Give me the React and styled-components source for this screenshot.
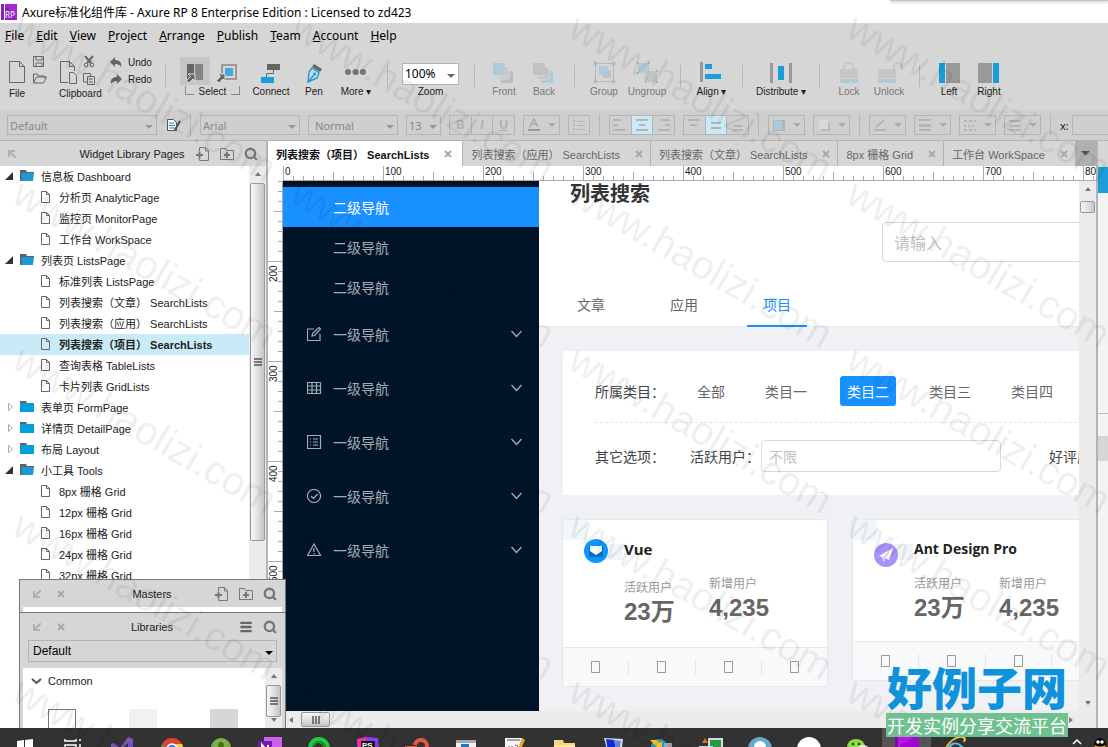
import React from "react";
import styled, { createGlobalStyle, css } from "styled-components";
import { Menu, Search } from "lucide-react";

const GlobalStyle = createGlobalStyle`
  * {
    box-sizing: border-box;
  }
  body {
    margin: 0;
    overflow: hidden;
    font-family: "Liberation Sans", "Noto Sans CJK SC", sans-serif;
    font-size: 11px;
    color: #222;
  }
  button, input, select {
    font: inherit;
    color: inherit;
    margin: 0;
    padding: 0;
    border: 0;
    border-radius: 0;
    background: none;
  }
  svg {
    display: block;
    flex: none;
  }
`;

const Desktop = styled.div`
  position: relative;
  height: 100vh;
  display: flex;
  flex-direction: column;
  overflow: hidden;
  background: #d6d6d6;
`;

/* ---------- title and menus ---------- */

const TitleBar = styled.header`
  display: flex;
  align-items: center;
  gap: 5px;
  height: 23px;
  padding-left: 1px;
  background: #fff;
  color: #000;
  font-family: "Noto Sans", "Noto Sans CJK SC", sans-serif;
  font-size: 12px;
  white-space: nowrap;
`;

const WindowShadow = styled.div`
  position: absolute;
  top: 0;
  right: 0;
  width: 218px;
  height: 1px;
  background: #c4c4c4;
  box-shadow: 0 1px 3px #999;
`;

const MenuBar = styled.nav`
  display: flex;
  gap: 12px;
  height: 24px;
  padding-left: 5px;
  color: #000;
  font-family: "Noto Sans", sans-serif;
  font-size: 12px;

  button::first-letter {
    text-decoration: underline;
  }
`;

/* ---------- main toolbar ---------- */

const Toolbar = styled.div`
  display: flex;
  align-items: flex-start;
  height: 63px;
  padding: 10px 0 0 9px;
  font-size: 10px;
  line-height: 12px;
  white-space: nowrap;
`;

const FileGroup = styled.div`
  width: ${(props) => props.$w}px;
  padding-top: 2px;
`;

const FileIcons = styled.div`
  display: flex;
  height: 29px;

  svg {
    overflow: visible;
  }
`;

const History = styled.div`
  display: flex;
  flex-direction: column;
  gap: 5px;
  width: 55px;

  button {
    display: flex;
    gap: 6px;
  }
`;

const Divider = styled.span`
  flex: none;
  width: 1px;
  height: 22px;
  margin: ${(props) => (props.$flat ? "0 1px" : "8px 0 0")};
  background: #b8b8b8;
`;

const Tool = styled.button`
  display: flex;
  flex-direction: column;
  align-items: center;
  flex: none;
  gap: 1px;
  width: ${(props) => props.$w}px;
  color: ${(props) => (props.disabled ? "#777" : "#222")};
`;

const ToolSpace = styled.span`
  flex: none;
  width: ${(props) => props.$w}px;
`;

const SelectModes = styled.div`
  width: 60px;
  margin: 0 9px 0 14px;
`;

const ModeRow = styled.div`
  display: flex;
`;

const Mode = styled.button`
  width: 30px;
  height: 28px;
  background: ${(props) => (props.$on ? "#c6c6c6" : "none")};
`;

const ModeLabel = styled.div`
  display: flex;
  justify-content: space-between;
  padding: 1px 0 0 5px;

  &::before, &::after {
    content: "";
    width: 8px;
    height: 8px;
    border: solid #888;
    border-width: 0 0 1px 1px;
  }
  &::after {
    border-width: 0 1px 1px 0;
  }
`;

const ZoomField = styled.div`
  display: flex;
  flex-direction: column;
  align-items: center;
  gap: 1px;
  width: 57px;
  margin: 6px 15px 0 14px;
`;

const Picker = styled.div`
  position: relative;
  flex: none;
  width: ${(props) => props.$w};
  height: ${(props) => props.$h || 20}px;
  border: 1px solid #b4b4b4;
  color: ${(props) => props.$color || "#888"};
  background: ${(props) => props.$bg || "none"};

  select {
    appearance: none;
    width: 100%;
    height: 100%;
    padding-left: ${(props) => props.$pad || 2}px;
    font-family: ${(props) =>
      props.$ui ? '"Liberation Sans", sans-serif' : '"Noto Sans", sans-serif'};
    font-size: ${(props) => props.$size || 11}px;
    outline: none;
  }
  svg {
    position: absolute;
    right: 3px;
    top: 50%;
    pointer-events: none;
  }
`;

/* ---------- format bar ---------- */

const FormatBar = styled.div`
  display: flex;
  align-items: center;
  gap: 8px;
  height: 30px;
  padding-left: 7px;
  background: #cfcfcf;
  white-space: nowrap;
`;

const Segments = styled.div`
  display: flex;
  flex: none;
  width: ${(props) => props.$w}px;
  border: 1px solid #b4b4b4;
`;

const Segment = styled.button`
  flex: 1;
  height: 18px;
  display: flex;
  align-items: center;
  justify-content: center;
  gap: 7px;
  color: #b0b0b0;
  background: ${(props) => (props.$on ? "#c9ebf7" : "none")};
  font-size: 12px;
  font-weight: bold;

  & + & {
    border-left: 1px solid #b4b4b4;
  }
`;

const PositionField = styled.div`
  display: flex;
  flex: 1;
  align-items: center;
  gap: 3px;
  margin-right: 2px;
  font-family: "Noto Sans", sans-serif;

  input {
    flex: 1;
    min-width: 0;
    height: 20px;
    border: 1px solid #b4b4b4;
  }
`;

/* ---------- workspace ---------- */

const Workspace = styled.div`
  flex: 1;
  min-height: 0;
  display: flex;
  border-top: 1px solid #b4b4b4;
`;

const PagesPanel = styled.aside`
  display: flex;
  flex-direction: column;
  flex: none;
  width: 268px;
  border-right: 2px solid #b4b4b4;
  background: #fff;
`;

const PanelHeader = styled.div`
  flex: none;
  display: flex;
  align-items: center;
  height: ${(props) => props.$h}px;
  padding: 0 8px;
  gap: 10px;
  background: #d6d6d6;

  h2 {
    flex: 1;
    margin: 0;
    padding-left: ${(props) => props.$left || 0}px;
    font-size: 11px;
    font-weight: normal;
    text-align: center;
    white-space: nowrap;
  }
`;

const DockControls = styled.div`
  display: flex;
  gap: 16px;
  padding-left: 5px;
`;

const PanelBody = styled.div`
  flex: 1;
  min-height: 0;
  display: flex;
`;

const Tree = styled.ul`
  flex: 1;
  margin: 0;
  padding: 0;
  list-style: none;
  overflow: hidden;
`;

const TreeRow = styled.li`
  display: flex;
  align-items: center;
  height: 21px;
  padding: 0 0 2px ${(props) => (props.$leaf ? 41 : 5)}px;
  gap: ${(props) => (props.$leaf ? 9 : 6)}px;
  background: ${(props) => (props.$on ? "#c9ebf7" : "none")};
  font-weight: ${(props) => (props.$on ? "bold" : "normal")};
  white-space: nowrap;
`;

const Track = styled.div`
  flex: none;
  display: flex;
  flex-direction: ${(props) => (props.$horizontal ? "row" : "column")};
  align-items: center;
  justify-content: space-between;
  ${(props) => (props.$horizontal ? "height: 17px" : "width: 17px")};
  padding: ${(props) => (props.$horizontal ? "0 5px" : "5px 0")};
  background: #ebebeb;
`;

const Thumb = styled.div`
  display: flex;
  align-items: center;
  justify-content: center;
  border: 1px solid #999;
  border-radius: 2px;
  background: linear-gradient(
    ${(props) => (props.$horizontal ? "to bottom" : "to right")},
    #f6f6f6,
    #e4e4e4 45%,
    #c4c4c8
  );
  ${(props) =>
    props.$horizontal
      ? css`
          width: ${props.$size};
          height: 15px;
          margin: 0 auto 0 7px;
        `
      : css`
          height: ${props.$size};
          width: 15px;
          margin: ${props.$gap || 8}px 0 auto;
        `}
`;

/* ---------- editor ---------- */

const Editor = styled.main`
  flex: 1;
  min-width: 0;
  display: flex;
  flex-direction: column;
  border-right: 2px solid #b4b4b4;
  background: #fff;
`;

const FileTabs = styled.div`
  display: flex;
  flex: none;
  height: 25px;
  background: #b0b0b0;
  overflow: hidden;
`;

const FileTab = styled.div`
  display: flex;
  flex: none;
  align-items: center;
  gap: 15px;
  padding: 0 ${(props) => (props.$on ? 10 : 7)}px 0 8px;
  border-right: 1px solid #b4b4b4;
  color: ${(props) => (props.$on ? "#111" : "#666")};
  background: ${(props) => (props.$on ? "#fff" : "#d6d6d6")};
  font-weight: ${(props) => (props.$on ? "bold" : "normal")};
  white-space: nowrap;
`;

const TabMenu = styled.button`
  flex: 1;
  display: flex;
  align-items: center;
  justify-content: center;
`;

const ticks = (dir, side) => css`
  background-image: repeating-linear-gradient(${dir}, #aaa 0 1px, transparent 1px 100px),
    repeating-linear-gradient(${dir}, #aaa 0 1px, transparent 1px 50px),
    repeating-linear-gradient(${dir}, #aaa 0 1px, transparent 1px 10px);
  background-repeat: no-repeat;
  background-position: ${side};
`;

const TopRuler = styled.div`
  flex: none;
  display: flex;
  height: 15px;
  margin-left: 15px;
  overflow: hidden;
  border-bottom: 1px solid #aaa;
  font-size: 10px;
  line-height: 11px;
  ${ticks("to right", "left bottom")}
  background-size: 100% 15px, 100% 8px, 100% 4px;

  span {
    flex: none;
    width: 100px;
    padding-left: 2px;
  }
`;

const EditorBody = styled.div`
  flex: 1;
  min-height: 0;
  display: flex;
`;

const SideRuler = styled.div`
  flex: none;
  width: 15px;
  overflow: hidden;
  border-right: 1px solid #aaa;
  padding-top: 80px;
  font-size: 10px;
  line-height: 12px;
  ${ticks("to bottom", "right -20px")}
  background-size: 15px 1000px, 8px 1000px, 4px 1000px;

  span {
    display: block;
    width: 12px;
    height: 100px;
    padding-bottom: 4px;
    writing-mode: vertical-rl;
    transform: rotate(180deg);
    text-align: right;
  }
`;

const Canvas = styled.div`
  flex: 1;
  min-width: 0;
  display: flex;
  overflow: hidden;
  font-family: "Noto Sans CJK SC", sans-serif;
  font-size: 14px;
`;

const SideNav = styled.nav`
  flex: none;
  width: 256px;
  padding-top: 6px;
  background: #001428;
`;

const SubItem = styled.a`
  display: block;
  height: 40px;
  padding-left: 50px;
  line-height: 40px;
  text-decoration: none;
  color: ${(props) => (props.$on ? "#fff" : "#a6adb4")};
  background: ${(props) => (props.$on ? "#1890ff" : "none")};
`;

const NavGroup = styled.button`
  display: flex;
  align-items: center;
  width: 100%;
  height: 54px;
  padding: 0 17px 0 24px;
  gap: 11px;
  color: #a6adb4;

  span {
    flex: 1;
    text-align: left;
  }
`;

const Page = styled.div`
  flex: 1;
  min-width: 0;
  overflow: hidden;
  background: #f0f1f5;
  color: #666;
  white-space: nowrap;
`;

const PageHead = styled.div`
  height: 146px;
  padding-left: 22px;
  background: #fff;
  border-bottom: 1px solid #e8e8e8;

  h1 {
    margin: 0 0 17px 9px;
    font-size: 20px;
    line-height: 24px;
    color: #333;
  }
`;

const SearchBox = styled.input`
  display: block;
  width: 400px;
  height: 40px;
  margin-left: 321px;
  padding-left: 11px;
  border: 1px solid #d9d9d9;
  border-radius: 4px;
  font-size: 16px;
  outline: none;

  &::placeholder {
    color: #bfbfbf;
  }
`;

const PageTabs = styled.div`
  display: flex;
  gap: 33px;
  margin-top: 21px;
`;

const PageTab = styled.button`
  height: 44px;
  padding: 0 16px;
  color: ${(props) => (props.$on ? "#1890ff" : "#666")};
  border-bottom: 2px solid ${(props) => (props.$on ? "#1890ff" : "transparent")};
`;

const Filters = styled.section`
  width: 800px;
  height: 144px;
  margin: 24px;
  padding: 9px 32px 0;
  background: #fff;
  border-radius: 2px;
`;

const FilterRow = styled.div`
  display: flex;
  align-items: center;
  height: ${(props) => props.$h}px;
  color: #444;

  & + & {
    border-top: 1px dashed #e4e4e4;
  }
`;

const Chips = styled.div`
  display: flex;
  gap: 26px;
  margin-left: 25px;
`;

const Chip = styled.button`
  height: 30px;
  padding: 0 7px;
  border-radius: 3px;
  color: ${(props) => (props.$on ? "#fff" : "#666")};
  background: ${(props) => (props.$on ? "#1890ff" : "none")};
`;

const FilterInput = styled.input`
  width: 240px;
  height: 32px;
  margin: 0 48px 0 1px;
  padding-left: 7px;
  border: 1px solid #d9d9d9;
  border-radius: 4px;
  outline: none;

  &::placeholder {
    color: #bfbfbf;
  }
`;

const Cards = styled.div`
  display: flex;
  flex-wrap: wrap;
  align-items: flex-start;
  width: 900px;
  gap: 24px;
  padding-left: 23px;
`;

const Card = styled.article`
  width: 266px;
  border: 1px solid #e6e8ea;
  border-radius: 2px;
  background: linear-gradient(#eff7f9, #eff7f9) 0 0 / 24px 20px no-repeat,
    linear-gradient(#eff7f9, #eff7f9) 36px 24px / 24px 16px no-repeat, #fff;
`;

const CardMain = styled.div`
  display: flex;
  gap: 16px;
  height: ${(props) => props.$h}px;
  padding: ${(props) => props.$top}px 0 0 21px;
`;

const CardText = styled.div`
  flex: 1;
  margin-top: ${(props) => props.$lift}px;

  h3 {
    margin: 0 0 16px;
    color: #222;
    font-family: "Open Sans", sans-serif;
    font-size: ${(props) => props.$size}px;
    line-height: 20px;
  }
`;

const Stats = styled.dl`
  display: flex;
  margin: 0;
`;

const Stat = styled.div`
  width: 85px;
  padding-top: ${(props) => props.$drop}px;

  dt {
    font-size: 12px;
    line-height: 16px;
    color: #999;
  }
  dd {
    margin: 3px 0 0;
    font: bold 24px/28px "Liberation Sans", "Noto Sans CJK SC", sans-serif;
    color: #666;
  }
`;

const CardActions = styled.div`
  display: flex;
  align-items: center;
  height: 39px;
  border-top: 1px solid #e6e8ea;
  background: #f7f9fa;
`;

const CardAction = styled.button`
  flex: 1;
  display: flex;
  justify-content: center;

  & + & {
    border-left: 1px solid #e4e6e8;
  }
`;

/* ---------- right edge ---------- */

const Inspector = styled.aside`
  flex: none;
  display: flex;
  flex-direction: column;
  width: 10px;
  padding-top: 26px;
  background: linear-gradient(#d6d6d6 26px, #f3f3f3 26px);
`;

const InspectorTab = styled.div`
  height: 26px;
  background: #1a9dd9;
`;

const InspectorSection = styled.div`
  height: 48px;
  margin-top: 220px;
  border-top: 1px solid #bbb;
  background: linear-gradient(#f3f3f3 22px, #d6d6d6 22px);
`;

/* ---------- floating panels ---------- */

const FloatingPanels = styled.div`
  position: absolute;
  left: 19px;
  bottom: 19px;
  width: 267px;
`;

const FloatingPanel = styled.section`
  border: 1px solid #777;
  border-bottom: 0;
  padding: 0 3px;
  background: #d6d6d6;
  height: ${(props) => props.$h}px;

  ${PanelHeader} {
    margin: 0 -3px;
  }
`;

const Blank = styled.div`
  height: 5px;
  background: #fff;
`;

const LibraryPicker = styled.div`
  padding: 0 5px;
`;

const LibraryBody = styled.div`
  display: flex;
  height: 60px;
  margin-top: 6px;
  background: #fff;
`;

const LibraryList = styled.div`
  flex: 1;
  padding: 7px 0 0 8px;
  overflow: hidden;

  h3 {
    display: flex;
    align-items: center;
    gap: 6px;
    margin: 0 0 21px;
    font-size: 11px;
    line-height: 13px;
    font-weight: normal;
  }
`;

const Swatches = styled.div`
  display: flex;
  gap: 53px;
  padding-left: 17px;
`;

const Swatch = styled.span`
  width: 28px;
  height: 28px;
  background: ${(props) => props.$fill};
  border: 1px solid ${(props) => props.$line || props.$fill};
`;

const ScrollRow = styled.div`
  flex: none;
  padding: 0 17px 0 15px;
  background: #ebebeb;
`;

/* ---------- taskbar ---------- */

const Taskbar = styled.footer`
  flex: none;
  display: flex;
  height: 19px;
  overflow: hidden;
  background: #323232;
`;

const TaskButton = styled.button`
  flex: none;
  display: flex;
  justify-content: center;
  width: 49px;
  height: 48px;
  padding-top: 9px;
  background: ${(props) => (props.$on ? "#555" : "none")};
`;

const Tray = styled.div`
  flex: 1;
  display: flex;
  justify-content: flex-end;
  gap: 10px;
  padding-top: 10px;
`;

/* ---------- overlays ---------- */

const WatermarkLayer = styled.div`
  position: absolute;
  inset: 0;
  display: grid;
  grid-template-columns: repeat(auto-fill, 278px);
  grid-auto-rows: 166px;
  padding: 6px 0 0 27px;
  width: 1400px;
  overflow: hidden;
  pointer-events: none;
  color: rgba(0, 0, 0, 0.08);
  font-size: 40px;
  line-height: 40px;

  span {
    transform: rotate(30deg);
    transform-origin: 0 0;
    white-space: nowrap;
  }
`;

const SiteBadge = styled.div`
  position: absolute;
  right: 40px;
  bottom: 10px;
  width: 182px;
  text-align: center;
  white-space: nowrap;
  font-family: "Noto Sans CJK SC", sans-serif;

  strong {
    display: block;
    margin-bottom: 3px;
    font-size: 45px;
    font-weight: 900;
    line-height: 46px;
    color: #0e92dc;
  }
  span {
    display: block;
    font-size: 18px;
    line-height: 24px;
    color: #fff;
    background: #70c191;
  }
`;

/* ---------- icons ---------- */

const Caret = ({ color = "#999", w = 8 }) => (
  <svg width={w} height={w / 2} viewBox="0 0 8 4">
    <path d="M0 0h8L4 4z" fill={color} />
  </svg>
);

const arrowPaths = {
  up: "M0 5 3 1l3 4z",
  down: "M0 1h6L3 5z",
  left: "M5 0v6L1 3z",
  right: "M1 0v6l4-3z",
};

const Arrow = ({ to }) => (
  <svg width="6" height="6" viewBox="0 0 6 6">
    <path d={arrowPaths[to]} fill="#777" />
  </svg>
);

const Grip = ({ turned }) => (
  <svg width="8" height="8" viewBox="0 0 8 8">
    <path
      d={turned ? "M1 0v8M4 0v8M7 0v8" : "M0 1h8M0 4h8M0 7h8"}
      stroke="#555"
      strokeWidth="1.500"
    />
  </svg>
);

const Cross = () => (
  <svg width="8" height="8" viewBox="0 0 8 8">
    <path d="m1 1 6 6M7 1 1 7" stroke="#a8a8a8" strokeWidth="2" />
  </svg>
);

const DockArrow = ({ up }) => (
  <svg width="8" height="8" viewBox="0 0 8 8" fill="none" stroke="#b0b0b0" strokeWidth="2">
    <path d={up ? "M7 1H1v6M1 1l7 7" : "M7 7H1V1M1 7l7-7"} />
  </svg>
);

const AddPage = () => (
  <svg width="14" height="14" viewBox="0 0 14 14" fill="none" stroke="#777">
    <path d="M3.500 4V.5h6l3 3v10h-9v-2M9.500 1v3h3" />
    <path d="M0 8h7M3.500 4.500v7" strokeWidth="2" />
  </svg>
);

const AddFolder = () => (
  <svg width="14" height="14" viewBox="0 0 14 14" fill="none" stroke="#777">
    <path d="M.5 12.500v-11h5l1 2h7v9z" />
    <path d="M4 8h6M7 5v6" strokeWidth="2" />
  </svg>
);

const PageIcon = () => (
  <svg width="9" height="12" viewBox="0 0 9 12" fill="none" stroke="#666">
    <path d="M.5.5h5l3 3v8h-8zM5.500.5v3h3" />
  </svg>
);

const FolderIcon = ({ open }) => (
  <svg width="15" height="12" viewBox="0 0 15 12">
    <path d="M0 0h6l1 2h7v2H0z" fill="#5d6066" />
    {open ? (
      <>
        <path d="M0 2h2v9H0z" fill="#5d6066" />
        <path d="M1 3h13l-1 8H2z" fill="#1b9ad6" />
      </>
    ) : (
      <path d="M0 2h14v9H0z" fill="#029fdd" />
    )}
  </svg>
);

const TreeArrow = ({ open }) => (
  <svg width="9" height="10" viewBox="0 0 9 10">
    {open ? (
      <path d="M8 1v8H0z" fill="#333" />
    ) : (
      <path d="M3.500 1.500v7l4-3.500z" fill="none" stroke="#aaa" />
    )}
  </svg>
);

const Art = ({ w = 28, children }) => (
  <svg width={w} height="28" viewBox={`0 0 ${w} 28`}>
    {children}
  </svg>
);

const Pointer = () => (
  <path
    d="M8 17h7v7l-2-2-4 4-2.500-2.500 4-4z"
    fill="#666"
    stroke="#ddd"
  />
);

const art = {
  connect: (
    <Art>
      <path d="M10 7h13v6H10z" fill="#666" />
      <path d="M16.500 13v3.500h-7V20" stroke="#666" fill="none" />
      <path d="M4 20h13v6H4z" fill="#1a9dd9" />
    </Art>
  ),
  pen: (
    <Art>
      <path d="m14 7 8 5-2 3-8-5z" fill="#666" />
      <path
        d="m12 11 7 5-2 5-9 4 1-10zM8 25l6-7"
        fill="none"
        stroke="#1a9dd9"
        strokeWidth="1.400"
      />
      <circle cx="14.500" cy="17" r="1.500" fill="#1a9dd9" />
    </Art>
  ),
  more: (
    <Art>
      <circle cx="6" cy="15" r="3" fill="#777" />
      <circle cx="13.500" cy="15" r="3" fill="#777" />
      <circle cx="21" cy="15" r="3" fill="#777" />
    </Art>
  ),
  front: (
    <Art>
      <path d="M15 14h8v12h-12v-4h8v-4h-4z" fill="#bdbdbd" />
      <path d="M10 10h9v12h-12v-3h9z" fill="#c9c9c9" stroke="#d6d6d6" />
      <path d="M3 6h12v12H3z" fill="#afcbd9" />
    </Art>
  ),
  back: (
    <Art>
      <path d="M15 14h8v12h-12v-4h8v-4h-4z" fill="#afcbd9" />
      <path d="M10 10h9v12h-12v-3h9z" fill="#c2c2c2" stroke="#d6d6d6" />
      <path d="M3 6h12v12H3z" fill="#c2c2c2" />
    </Art>
  ),
  group: (
    <Art>
      <path d="M5.500 6.500h18v18h-18z" fill="none" stroke="#b8b8b8" />
      <path d="M13 13h8v8h-8z" fill="#c2c2c2" />
      <path d="M9 9h9v9H9z" fill="#afcbd9" />
      <g fill="#b8b8b8">
        <circle cx="5.500" cy="6.500" r="2" />
        <circle cx="23.500" cy="6.500" r="2" />
        <circle cx="5.500" cy="24.500" r="2" />
        <circle cx="23.500" cy="24.500" r="2" />
      </g>
    </Art>
  ),
  ungroup: (
    <Art>
      <path d="M5 6h11v10H5z" fill="#afcbd9" />
      <path d="M13 14h11v11H13z" fill="#c2c2c2" />
      <path
        d="M4 5h2v2H4zM15 5h2v2h-2zM4 15h2v2H4zM12 24h2v2h-2zM23 13h2v2h-2zM23 24h2v2h-2z"
        fill="#b4b4b4"
      />
    </Art>
  ),
  align: (
    <Art>
      <path d="M2 5h3v20H2z" fill="#999" />
      <path d="M7 7h7v5H7zM7 17h16v5H7z" fill="#1a9dd9" />
    </Art>
  ),
  distribute: (
    <Art>
      <path d="M3 6h3v20H3zM22 6h3v20h-3z" fill="#999" />
      <path d="M11 9h6v14h-6z" fill="#1a9dd9" />
    </Art>
  ),
  lock: (
    <Art>
      <path d="M9 14v-3a5 5 0 0 1 10 0v3" fill="none" stroke="#c6c6c6" strokeWidth="2" />
      <path d="M5 12h18v9H5z" fill="#c6c6c6" />
      <path d="M5 22h18v4H5z" fill="#afcbd9" />
    </Art>
  ),
  unlock: (
    <Art>
      <path d="M19 12v-2a4 4 0 0 1 8 0v3" fill="none" stroke="#c6c6c6" strokeWidth="2" />
      <path d="M3 12h18v9H3z" fill="#c6c6c6" />
      <path d="M3 22h18v4H3z" fill="#afcbd9" />
    </Art>
  ),
  left: (
    <Art>
      <path d="M4 6h6v20H4z" fill="#1a9dd9" />
      <path d="M11 6h14v20H11z" fill="#999" />
    </Art>
  ),
  right: (
    <Art>
      <path d="M3 6h14v20H3z" fill="#999" />
      <path d="M18 6h6v20h-6z" fill="#1a9dd9" />
    </Art>
  ),
};

const Glyph = ({ d, w = 14, color = "#b4b4b4" }) => (
  <svg width={w} height="14" viewBox={`0 0 ${w} 14`}>
    <path d={d} stroke={color} strokeWidth="2" fill="none" />
  </svg>
);

const taskIcons = [
  <path key="start" d="m4 4 7-1v8H4zM12 3l8-1v9h-8zM4 12h7v8l-7-1zM12 12h8v9l-8-1z" fill="#fff" />,
  <g key="view" fill="none" stroke="#fff" strokeWidth="1.500">
    <path d="M3 2v2h11V2M3 8h11v8H3zM18 2v2M18 7v12" />
  </g>,
  <g key="vs">
    <path d="m0 7 3-1 6 5 8-11 5 2v20l-5 2L9 14l-6 4-3-1z" fill="#7b55bd" />
    <path d="M17 6v12l-6-6z" fill="#323232" />
  </g>,
  <g key="chrome">
    <circle cx="12" cy="12" r="11" fill="#de4435" />
    <path d="M2 7 9 18l-1 5A11 11 0 0 1 2 7z" fill="#27a057" />
    <path d="M12 7h10a11 11 0 0 1-9 16z" fill="#f8cc3f" />
    <circle cx="12" cy="12" r="5" fill="#3f84e8" stroke="#fff" strokeWidth="1.500" />
  </g>,
  <g key="green">
    <circle cx="12" cy="11" r="10" fill="#7fb045" />
    <circle cx="12" cy="8" r="3" fill="#496f22" />
    <path d="M7 14h10v5H7z" fill="#496f22" />
  </g>,
  <g key="note">
    <path d="M6 0h18v24H6z" fill="#ca62ed" />
    <path d="M0 4h14v16H0z" fill="#7518ac" />
    <path d="M4 15V8l6 7V8" fill="none" stroke="#fff" strokeWidth="2" />
  </g>,
  <g key="ever">
    <circle cx="12" cy="11" r="9" fill="none" stroke="#23ca3e" strokeWidth="4" />
    <path d="M5 9c3 0 3-4 5-4 4 0 7 1 8 6" fill="none" stroke="#1e9b32" strokeWidth="2" />
  </g>,
  <g key="ps">
    <path d="m1 2 10-2 11 1 2 20H2z" fill="#8b3cf5" />
    <path d="m1 2 10-2-7 12H2z" fill="#f8329b" />
    <path d="M5 4h14v14H5z" fill="#111" />
    <text x="6" y="11" fontSize="8" fontWeight="bold" fill="#fff">PS</text>
  </g>,
  <g key="red" fill="none" stroke="#e45b43" strokeWidth="4">
    <path d="M0 11h12M10 8a6 6 0 1 1 6 7" />
  </g>,
  <g key="window">
    <path d="M2 3h20v18H2z" fill="#f0f0f0" />
    <path d="M2 3h20v3H2z" fill="#aaa" />
    <path d="M7 7h8v9H7z" fill="#1b78d1" />
  </g>,
  <g key="notepad">
    <path d="M2 1h17v22H2z" fill="#f4f4f4" />
    <path d="M4 3h13M6 9v9M9 9v9M12 9c3-3 4 2 0 6" stroke="#555" fill="none" />
    <path d="m19 1 3 2-6 13-3 1z" fill="#e9a820" />
  </g>,
  <g key="folder">
    <path d="M2 3h9l1 3h11v16H2z" fill="#f4d779" />
    <path d="M2 8h21v15H2z" fill="#fce8a0" />
  </g>,
  <g key="monitor">
    <path d="m3 1 19 1-2 16-13-2z" fill="#d9dde3" />
    <path d="m5 2 8 1 3 13-9-2z" fill="#102ad2" />
    <path d="m13 3 7 1-2 11-2 1z" fill="#6583dd" />
  </g>,
  <g key="db">
    <circle cx="9" cy="10" r="8" fill="#2a97d5" />
    <path d="M0 3h7l3 3 2-2v9H4l3-3z" fill="#f3c519" />
    <path d="M14 6h8v15h-8z" fill="#9da5a9" />
  </g>,
  <g key="swap">
    <path d="M9 1h15v12H9z" fill="#d9d9d9" />
    <path d="M11 3h11v8H11z" fill="#269a3e" />
    <path d="M0 9h14v12H0z" fill="#c2d2df" />
    <path d="M2 11h10v8H2z" fill="#255caf" />
    <path d="m6 1-3 5h6z" fill="#d57527" />
  </g>,
  <g key="cloud">
    <circle cx="12" cy="12" r="12" fill="#69a9cf" />
    <path d="M4 18a5 5 0 0 1 2-8 6 6 0 0 1 12 0 5 5 0 0 1 2 8z" fill="#fff" />
  </g>,
  <g key="erp">
    <circle cx="12" cy="12" r="12" fill="#fff" />
    <text x="1" y="15" fontSize="8" fontWeight="bold" fill="#222">
      <tspan fill="#d22">c</tspan>ERP
    </text>
  </g>,
  <g key="chat">
    <ellipse cx="10" cy="10" rx="9" ry="8" fill="#8ddb45" />
    <ellipse cx="17" cy="14" rx="7" ry="6" fill="#eee" />
    <circle cx="7" cy="7" r="1.300" fill="#284d10" />
    <circle cx="13" cy="7" r="1.300" fill="#284d10" />
  </g>,
  <g key="axure">
    <path d="M0 0h24v24H0z" fill="#c112ec" />
    <path d="M0 0h3v24H0z" fill="#7e0aa5" />
    <path d="M5 8 20 0h4v24H8z" fill="#9f08ca" />
  </g>,
  <g key="ie">
    <path
      d="M21 14H7a5 5 0 0 0 9 3h5A10 10 0 1 1 21 14zM7 10h9a5 5 0 0 0-9 0z"
      fill="#50bcea"
    />
    <path d="M2 12C4 4 17-4 21 2l-1 3" fill="none" stroke="#f2c43d" strokeWidth="2" />
  </g>,
];

/* ---------- data ---------- */

const menus = ["File", "Edit", "View", "Project", "Arrange", "Publish", "Team", "Account", "Help"];

const tree = [
  { name: "信息板 Dashboard", open: true },
  { name: "分析页 AnalyticPage", leaf: true },
  { name: "监控页 MonitorPage", leaf: true },
  { name: "工作台 WorkSpace", leaf: true },
  { name: "列表页 ListsPage", open: true },
  { name: "标准列表 ListsPage", leaf: true },
  { name: "列表搜索（文章） SearchLists", leaf: true },
  { name: "列表搜索（应用） SearchLists", leaf: true },
  { name: "列表搜索（项目） SearchLists", leaf: true, on: true },
  { name: "查询表格 TableLists", leaf: true },
  { name: "卡片列表 GridLists", leaf: true },
  { name: "表单页 FormPage" },
  { name: "详情页 DetailPage" },
  { name: "布局 Layout" },
  { name: "小工具 Tools", open: true },
  { name: "8px 栅格 Grid", leaf: true },
  { name: "12px 栅格 Grid", leaf: true },
  { name: "16px 栅格 Grid", leaf: true },
  { name: "24px 栅格 Grid", leaf: true },
  { name: "32px 栅格 Grid", leaf: true },
];

const fileTabs = [
  "列表搜索（项目） SearchLists",
  "列表搜索（应用） SearchLists",
  "列表搜索（文章） SearchLists",
  "8px 栅格 Grid",
  "工作台 WorkSpace",
];

const navIcons = [
  <path key="edit" d="M13 7v6.500H.5V2H7M5 9l.5-2.500L12 .5l1.500 1.500L7.500 8.500z" />,
  <path key="table" d="M.5 1.500h13v11H.5zM.5 5h13M.5 9h13M5 1.500v11M9.500 1.500v11" />,
  <path key="list" d="M.5.5h13v13H.5zM3 4h1M6 4h5M3 7h1M6 7h5M3 10h1M6 10h5" />,
  <path key="check" d="M7 .5a6.500 6.500 0 1 0 .01 0M4 7l2.500 2.500L10.500 5" />,
  <path key="warn" d="M7 1 .5 12.500h13zM7 5v4M7 10v1.500" />,
];

const formatGlyphs = {
  align: ["M0 2h8M0 7h5M0 12h12", "M1 2h12M4 7h6M1 12h12", "M4 2h9M8 7h5M1 12h12"],
  valign: ["M1 2h12M3 7h7", "M2 5h10M2 10h10", "M2 8h10M2 12h10"],
};

/* ---------- parts ---------- */

function Dropdown({ label, value, id, caret, ...rest }) {
  return (
    <Picker {...rest}>
      <select id={id} aria-label={label} defaultValue={value}>
        <option>{value}</option>
      </select>
      <Caret color={caret} />
    </Picker>
  );
}

function ToolItem({ icon, label, w, disabled }) {
  return (
    <Tool $w={w} disabled={disabled}>
      {art[icon]}
      {label}
    </Tool>
  );
}

function GlyphButton({ d, label, extra }) {
  return (
    <Segments $w={37}>
      <Segment aria-label={label}>
        {extra || <Glyph d={d} />}
        <Caret color="#aaa" w={8} />
      </Segment>
    </Segments>
  );
}

function MainToolbar() {
  return (
    <Toolbar>
      <FileGroup $w={50}>
        <FileIcons>
          <svg width="42" height="29" viewBox="0 0 42 29" fill="none" stroke="#666">
            <path d="M.5 2.500h10l5 5v16H.5zM10.500 2.500v5h5" />
            <path d="M24.500-2.500h10v10h-10zM27-2v3h6v-3M27 7V4h6v3" />
            <path d="M24.500 24v-9h4l1 2h6v2M24.500 24l3-6h10l-3 6z" />
          </svg>
        </FileIcons>
        File
      </FileGroup>
      <FileGroup $w={51}>
        <FileIcons>
          <svg width="42" height="29" viewBox="0 0 42 29" fill="none" stroke="#666">
            <path d="M9 23.500H1.500v-21h9l5 5V12M10.500 2.500v5h5M10.500 13.500h4l3 3v8h-7z" />
            <path d="m26-3 6 7M34-3l-6 7" strokeWidth="2" />
            <circle cx="27" cy="6" r="1.800" />
            <circle cx="33" cy="6" r="1.800" />
            <path d="M28 23h-3.500V14.500h7V17M28.500 17.500h7v8h-7zM30 20h4M30 23h4" />
          </svg>
        </FileIcons>
        Clipboard
      </FileGroup>
      <History>
        <button>
          <svg width="12" height="11" viewBox="0 0 12 11">
            <path d="m0 5 5-5v3c5 0 7 3 6 7-1-2-3-3-6-3v3z" fill="#666" />
          </svg>
          Undo
        </button>
        <button>
          <svg width="12" height="11" viewBox="0 0 12 11">
            <path d="M12 5 7 0v3C2 3 0 6 1 10c1-2 3-3 6-3v3z" fill="#666" />
          </svg>
          Redo
        </button>
      </History>
      <Divider />
      <SelectModes>
        <ModeRow>
          <Mode $on aria-label="Select intersected">
            <Art w={30}>
              <path d="M7 7h7v16H7z" fill="#666" />
              <path d="M15 7h8v16h-8z" fill="#858585" />
              <Pointer />
            </Art>
          </Mode>
          <Mode aria-label="Select contained">
            <Art w={30}>
              <path d="M12 8h14v14H12z" fill="#d6d6d6" stroke="#999" strokeWidth="2" />
              <path d="M15 11h8v8h-8z" fill="#42a8d8" />
              <Pointer />
            </Art>
          </Mode>
        </ModeRow>
        <ModeLabel>Select</ModeLabel>
      </SelectModes>
      <ToolItem icon="connect" label="Connect" w={44} />
      <ToolItem icon="pen" label="Pen" w={42} />
      <ToolItem icon="more" label="More ▾" w={42} />
      <ToolSpace $w={10} />
      <Divider />
      <ZoomField>
        <Dropdown id="zoom" value="100%" $w="57px" $h={22} $bg="#fff" $color="#000" $size={12} caret="#666" />
        <label htmlFor="zoom">Zoom</label>
      </ZoomField>
      <Divider />
      <ToolItem icon="front" label="Front" w={58} disabled />
      <ToolItem icon="back" label="Back" w={22} disabled />
      <ToolSpace $w={19} />
      <Divider />
      <ToolItem icon="group" label="Group" w={58} disabled />
      <ToolItem icon="ungroup" label="Ungroup" w={28} disabled />
      <ToolSpace $w={19} />
      <Divider />
      <ToolItem icon="align" label="Align ▾" w={61} />
      <Divider />
      <ToolItem icon="distribute" label="Distribute ▾" w={76} />
      <Divider />
      <ToolItem icon="lock" label="Lock" w={58} disabled />
      <ToolItem icon="unlock" label="Unlock" w={22} disabled />
      <ToolSpace $w={19} />
      <Divider />
      <ToolItem icon="left" label="Left" w={58} />
      <ToolItem icon="right" label="Right" w={22} />
    </Toolbar>
  );
}

function FormatToolbar() {
  return (
    <FormatBar>
      <Dropdown label="Widget style" value="Default" $w="150px" />
      <svg width="16" height="14" viewBox="0 0 16 14" fill="none" stroke="#555">
        <path d="M2.500 1.500h6l3 3v8h-9z" fill="#fff" />
        <path d="M4 5h5M4 7.500h6M4 10h6" stroke="#1a9dd9" />
        <path d="m10 12 5-9" strokeWidth="2" />
      </svg>
      <Divider $flat />
      <Dropdown label="Font" value="Arial" $w="100px" />
      <Dropdown label="Typeface" value="Normal" $w="90px" $pad={6} />
      <Dropdown label="Font size" value="13" $w="35px" />
      <Segments $w={66}>
        <Segment>B</Segment>
        <Segment><i>I</i></Segment>
        <Segment><u>U</u></Segment>
      </Segments>
      <GlyphButton
        label="Text color"
        extra={
          <svg width="14" height="14" viewBox="0 0 14 14">
            <path d="m3 9 4-8 4 8M4 6h6" stroke="#aaa" strokeWidth="1.500" fill="none" />
            <path d="M1 11h12v2H1z" fill="#999" />
          </svg>
        }
      />
      <Segments $w={22}>
        <Segment aria-label="Bullets">
          <svg width="12" height="10" viewBox="0 0 12 10">
            <path d="M0 1h2M0 5h2M0 9h2" stroke="#9fc6d8" strokeWidth="2" />
            <path d="M4 1.500h8M4 5.500h8M4 9.500h8" stroke="#b4b4b4" />
          </svg>
        </Segment>
      </Segments>
      <Divider $flat />
      <Segments $w={66}>
        {formatGlyphs.align.map((d, i) => (
          <Segment key={d} $on={i === 1} aria-label="Align text">
            <Glyph d={d} />
          </Segment>
        ))}
      </Segments>
      <Segments $w={66}>
        {formatGlyphs.valign.map((d, i) => (
          <Segment key={d} $on={i === 1} aria-label="Align text vertically">
            <Glyph d={d} />
          </Segment>
        ))}
      </Segments>
      <Divider $flat />
      <GlyphButton
        label="Fill"
        extra={
          <svg width="14" height="14" viewBox="0 0 14 14">
            <path d="M1 2h12v11H1z" fill="#b4b4b4" />
            <path d="M2 3h8v9H2z" fill="#a9cbdc" />
          </svg>
        }
      />
      <GlyphButton
        label="Shadow"
        extra={
          <svg width="14" height="14" viewBox="0 0 14 14">
            <path d="M4 4h9v9H4z" fill="#bbb" />
            <path d="M2 2h9v9H2z" fill="#dadada" />
          </svg>
        }
      />
      <Divider $flat />
      <GlyphButton label="Line color" d="M1 12h12M3 9l8-7" />
      <GlyphButton label="Line width" d="M1 2h12M1 7h12M1 8h12M1 12h12" />
      <GlyphButton label="Line style" d="M1 3h3M6 3h3M11 3h2M1 8h2M5 8h2M9 8h2M1 12h3M6 12h3M11 12h2" />
      <GlyphButton label="Arrow style" d="M1 3h12M1 8h12M1 12h12" />
      <Divider $flat />
      <PositionField>
        <label htmlFor="pos-x">x:</label>
        <input id="pos-x" />
      </PositionField>
    </FormatBar>
  );
}

function ScrollBar({ horizontal, size, gap }) {
  return (
    <Track $horizontal={horizontal}>
      <Arrow to={horizontal ? "left" : "up"} />
      <Thumb $horizontal={horizontal} $size={size} $gap={gap}>
        {size !== "12px" && <Grip turned={horizontal} />}
      </Thumb>
      <Arrow to={horizontal ? "right" : "down"} />
    </Track>
  );
}

function ProjectCard({ name, size, icon, top, lift, height, drops }) {
  return (
    <Card>
      <CardMain $top={top} $h={height}>
        {icon}
        <CardText $size={size} $lift={lift}>
          <h3>{name}</h3>
          <Stats>
            <Stat $drop={drops[0]}>
              <dt>活跃用户</dt>
              <dd>23万</dd>
            </Stat>
            <Stat $drop={drops[1]}>
              <dt>新增用户</dt>
              <dd>4,235</dd>
            </Stat>
          </Stats>
        </CardText>
      </CardMain>
      <CardActions>
        {["download", "edit", "share", "more"].map((action) => (
          <CardAction key={action} aria-label={action}>
            <svg width="9" height="15" viewBox="0 0 9 15">
              <path d="M.5 1.500h8v11h-8z" fill="none" stroke="#999" />
            </svg>
          </CardAction>
        ))}
      </CardActions>
    </Card>
  );
}

const mailIcon = (
  <svg width="24" height="24" viewBox="0 0 24 24">
    <circle cx="12" cy="12" r="12" fill="#0d96fb" />
    <path d="M5 7h14v11H5z" fill="#0a6fc4" />
    <path d="M6 7h12v5l-6 4-6-4z" fill="#fff" />
  </svg>
);

const planeIcon = (
  <svg width="24" height="24" viewBox="0 0 24 24">
    <circle cx="12" cy="12" r="12" fill="#aa93f7" />
    <path d="M5 13 19 5l-4 12-4-2-1 4-2-5z" fill="#fff" />
    <path d="m8 14 9-7-6 8-1 4z" fill="#ddd5fb" />
  </svg>
);

function Prototype() {
  return (
    <Canvas>
      <SideNav>
        <SubItem href="#" $on>二级导航</SubItem>
        <SubItem href="#">二级导航</SubItem>
        <SubItem href="#">二级导航</SubItem>
        {navIcons.map((icon) => (
          <NavGroup key={icon.key}>
            <svg width="15" height="14" viewBox="0 0 15 14" fill="none" stroke="#a6adb4" strokeWidth="1.200">
              {icon}
            </svg>
            <span>一级导航</span>
            <svg width="11" height="8" viewBox="0 0 11 8" fill="none" stroke="#a6adb4" strokeWidth="1.300">
              <path d="M.5 1 5.500 6.500 10.500 1" />
            </svg>
          </NavGroup>
        ))}
      </SideNav>
      <Page>
        <PageHead>
          <h1>列表搜索</h1>
          <SearchBox placeholder="请输入" aria-label="搜索" />
          <PageTabs>
            <PageTab>文章</PageTab>
            <PageTab>应用</PageTab>
            <PageTab $on>项目</PageTab>
          </PageTabs>
        </PageHead>
        <Filters>
          <FilterRow $h={62}>
            所属类目：
            <Chips>
              <Chip>全部</Chip>
              <Chip>类目一</Chip>
              <Chip $on>类目二</Chip>
              <Chip>类目三</Chip>
              <Chip>类目四</Chip>
            </Chips>
          </FilterRow>
          <FilterRow $h={66}>
            其它选项：
            <Chips as="label" htmlFor="active-users">活跃用户：</Chips>
            <FilterInput id="active-users" placeholder="不限" />
            好评度：
          </FilterRow>
        </Filters>
        <Cards>
          <ProjectCard name="Vue" size={15} icon={mailIcon} top={19} lift={0} height={127} drops={[4, 0]} />
          <ProjectCard name="Ant Design Pro" size={14} icon={planeIcon} top={23} lift={-4} height={121} drops={[0, 0]} />
        </Cards>
      </Page>
    </Canvas>
  );
}

function LeftPanels() {
  return (
    <FloatingPanels>
      <FloatingPanel $h={33}>
        <PanelHeader $h={27} $left={24}>
          <DockControls>
            <DockArrow />
            <Cross />
          </DockControls>
          <h2>Masters</h2>
          <AddPage />
          <AddFolder />
          <Search size={14} color="#777" strokeWidth={4} />
        </PanelHeader>
        <Blank />
      </FloatingPanel>
      <FloatingPanel $h={116}>
        <PanelHeader $h={27}>
          <DockControls>
            <DockArrow />
            <Cross />
          </DockControls>
          <h2>Libraries</h2>
          <Menu size={14} color="#666" strokeWidth={4} />
          <Search size={14} color="#777" strokeWidth={4} />
        </PanelHeader>
        <LibraryPicker>
          <Dropdown label="Library" value="Default" $w="100%" $h={22} $color="#000" $size={12} $pad={4} caret="#000" $ui />
        </LibraryPicker>
        <LibraryBody>
          <LibraryList>
            <h3>
              <svg width="11" height="7" viewBox="0 0 11 7" fill="none" stroke="#555" strokeWidth="2">
                <path d="m1 1 4.500 4L10 1" />
              </svg>
              Common
            </h3>
            <Swatches>
              <Swatch $fill="#fff" $line="#777" />
              <Swatch $fill="#f1f1f1" />
              <Swatch $fill="#d6d6d6" />
            </Swatches>
          </LibraryList>
          <ScrollBar size="39px" gap={6} />
        </LibraryBody>
      </FloatingPanel>
    </FloatingPanels>
  );
}

export default function App() {
  return (
    <Desktop>
      <GlobalStyle />
      <TitleBar>
        <svg width="16" height="16" viewBox="0 0 16 16">
          <path d="M0 0h3v16H0z" fill="#8a1fb0" />
          <path d="M4 0h12v16H4z" fill="#a52bd0" />
          <path d="m4 0 12 16H4z" fill="#8f1dbb" />
          <text x="4" y="14" fontSize="8" fill="#fff">RP</text>
        </svg>
        Axure标准化组件库 - Axure RP 8 Enterprise Edition : Licensed to zd423
      </TitleBar>
      <WindowShadow />
      <MenuBar>
        {menus.map((menu) => (
          <button key={menu}>{menu}</button>
        ))}
      </MenuBar>
      <MainToolbar />
      <FormatToolbar />
      <Workspace>
        <PagesPanel>
          <PanelHeader $h={25} $left={52}>
            <DockArrow up />
            <h2>Widget Library Pages</h2>
            <AddPage />
            <AddFolder />
            <Search size={14} color="#777" strokeWidth={4} />
          </PanelHeader>
          <PanelBody>
            <Tree>
              {tree.map((row) => (
                <TreeRow key={row.name} $leaf={row.leaf} $on={row.on}>
                  {row.leaf ? (
                    <PageIcon />
                  ) : (
                    <>
                      <TreeArrow open={row.open} />
                      <FolderIcon open={row.open} />
                    </>
                  )}
                  {row.name}
                </TreeRow>
              ))}
            </Tree>
            <ScrollBar size="358px" gap={6} />
          </PanelBody>
        </PagesPanel>
        <Editor>
          <FileTabs>
            {fileTabs.map((tab, i) => (
              <FileTab key={tab} $on={i === 0}>
                {tab}
                <button aria-label="Close tab"><Cross /></button>
              </FileTab>
            ))}
            <TabMenu aria-label="All tabs"><Caret color="#555" w={9} /></TabMenu>
          </FileTabs>
          <TopRuler>
            {[0, 100, 200, 300, 400, 500, 600, 700, 800].map((n) => (
              <span key={n}>{n}</span>
            ))}
          </TopRuler>
          <EditorBody>
            <SideRuler>
              {[200, 300, 400, 500].map((n) => (
                <span key={n}>{n}</span>
              ))}
            </SideRuler>
            <Prototype />
            <ScrollBar size="12px" gap={9} />
          </EditorBody>
          <ScrollRow>
            <ScrollBar horizontal size="29px" />
          </ScrollRow>
        </Editor>
        <Inspector>
          <InspectorTab />
          <InspectorSection />
        </Inspector>
      </Workspace>
      <Taskbar>
        {taskIcons.map((icon) => (
          <TaskButton key={icon.key} $on={icon.key === "axure"} aria-label={icon.key}>
            <svg width="24" height="24" viewBox="0 0 24 24">{icon}</svg>
          </TaskButton>
        ))}
        <Tray>
          <svg width="10" height="8" viewBox="0 0 10 8" fill="none" stroke="#fff" strokeWidth="1.500">
            <path d="m1 6 4-4 4 4" />
          </svg>
          <svg width="16" height="16" viewBox="0 0 16 16">
            <ellipse cx="8" cy="7" rx="6" ry="7" fill="#0a0a0a" />
            <circle cx="6" cy="4" r="1.700" fill="#fff" />
            <circle cx="10" cy="4" r="1.700" fill="#fff" />
            <path d="M3 7c3 2 7 2 10 0l1 3H2z" fill="#e8a21e" />
          </svg>
        </Tray>
      </Taskbar>
      <LeftPanels />
      <WatermarkLayer aria-hidden="true">
        {Array.from({ length: 25 }, (_, i) => (
          <span key={i}>www.haolizi.com</span>
        ))}
      </WatermarkLayer>
      <SiteBadge>
        <strong>好例子网</strong>
        <span>开发实例分享交流平台</span>
      </SiteBadge>
    </Desktop>
  );
}
